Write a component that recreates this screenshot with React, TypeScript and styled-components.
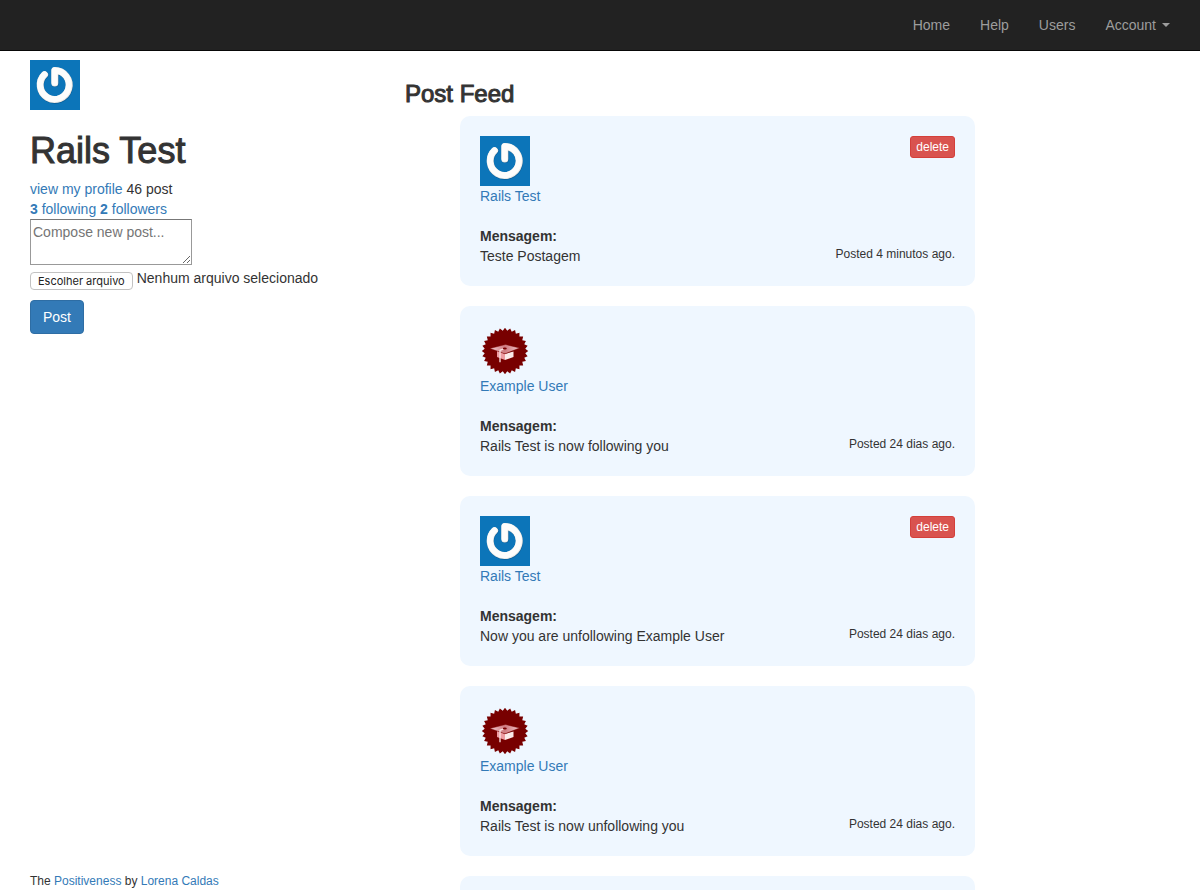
import React from "react";
import styled, { createGlobalStyle } from "styled-components";

const GlobalStyle = createGlobalStyle`
  *, *::before, *::after { box-sizing: border-box; }
  body {
    margin: 0;
    background: #fff;
    color: #333;
    font: 14px/20px "Helvetica Neue", Helvetica, "Liberation Sans", Arial, sans-serif;
  }
`;

const Page = styled.div`
  display: grid;
  grid-template-rows: auto minmax(0, 1fr);
  height: 100vh;
`;

const Navbar = styled.header`
  background: #222;
  border-bottom: 1px solid #080808;
`;

const NavList = styled.nav`
  display: flex;
  justify-content: flex-end;
  max-width: 1170px;
  margin: 0 auto;
`;

const NavLink = styled.a`
  display: flex;
  align-items: center;
  padding: 15px;
  color: #9d9d9d;
  text-decoration: none;
  &:hover { color: #fff; }
`;

const Caret = styled.span`
  margin-left: 6px;
  border-top: 4px solid;
  border-left: 4px solid transparent;
  border-right: 4px solid transparent;
`;

const Main = styled.main`
  display: grid;
  grid-template-columns: minmax(0, 1fr) minmax(0, 2fr);
  width: 100%;
  max-width: 1170px;
  margin: 0 auto;
  min-height: 0;
`;

const Sidebar = styled.aside`
  display: flex;
  flex-direction: column;
  align-items: flex-start;
  padding: 9px 15px 0;
`;

const UserName = styled.h1`
  margin: 20px 0 8px;
  font-size: 36px;
  line-height: 41px;
  font-weight: 500;
  -webkit-text-stroke: 1px currentColor;
`;

const Link = styled.a`
  color: #337ab7;
  text-decoration: none;
  &:hover { text-decoration: underline; }
`;

const PostForm = styled.form`
  display: flex;
  flex-direction: column;
  align-items: flex-start;
`;

const Composer = styled.textarea`
  width: 162px;
  height: 46px;
  padding: 2px;
  border: 1px solid #999;
  border-top-color: #777;
  font: inherit;
  color: inherit;
  &::placeholder { color: #757575; }
`;

const FilePicker = styled.label`
  display: flex;
  align-items: flex-start;
  gap: 4px;
  margin: 3px 0 10px;
`;

const FileInput = styled.input`
  position: absolute;
  width: 1px;
  height: 1px;
  opacity: 0;
`;

const FileButton = styled.span`
  margin-top: 4px;
  padding: 0 7px;
  border: 1px solid #c2c2c2;
  border-radius: 4px;
  color: #222;
  font: 11px/16px Inter, sans-serif;
`;

const Button = styled.button<{ $tone: "primary" | "danger" }>`
  border: 1px solid ${(p) => (p.$tone === "primary" ? "#2e6da4" : "#d43f3a")};
  border-radius: ${(p) => (p.$tone === "primary" ? 4 : 3)}px;
  padding: ${(p) => (p.$tone === "primary" ? "6px 12px" : "1px 5px")};
  background: ${(p) => (p.$tone === "primary" ? "#337ab7" : "#d9534f")};
  color: #fff;
  font-family: inherit;
  font-size: ${(p) => (p.$tone === "primary" ? 14 : 12)}px;
  line-height: ${(p) => (p.$tone === "primary" ? 20 : 18)}px;
  cursor: pointer;
`;

const Footer = styled.footer`
  margin-top: auto;
  font-size: 12px;
  line-height: 18px;
`;

const Feed = styled.section`
  padding: 9px 15px 0 0;
  overflow-y: auto;
  scrollbar-width: none;
`;

const FeedTitle = styled.h3`
  margin: 20px 0 8px;
  font-size: 24px;
  line-height: 28px;
  font-weight: 500;
  -webkit-text-stroke: 1px currentColor;
`;

const PostList = styled.ol`
  display: grid;
  gap: 20px;
  max-width: 570px;
  margin: 0;
  padding: 0 0 20px 55px;
  list-style: none;
`;

const PostCard = styled.li`
  display: flex;
  justify-content: space-between;
  min-height: 170px;
  padding: 20px;
  border-radius: 10px;
  background: #eff7ff;
`;

const PostBody = styled.div`
  display: flex;
  flex-direction: column;
  align-items: flex-start;
`;

const PostAside = styled.div`
  display: flex;
  flex-direction: column;
  align-items: flex-end;
`;

const MessageLabel = styled.strong`
  margin-top: 20px;
`;

const Timestamp = styled.time`
  margin-top: auto;
  padding-bottom: 3px;
  font-size: 12px;
  line-height: 18px;
`;

const AvatarSvg = styled.svg`
  display: block;
  flex: none;
`;

type Kind = "power" | "badge";

const TEETH = 28;
const badgePoints = Array.from({ length: TEETH * 2 }, (_, i) => {
  const angle = (i * Math.PI) / TEETH;
  const radius = i % 2 ? 20.4 : 23.2;
  return `${(25 + radius * Math.sin(angle)).toFixed(2)},${(25 - radius * Math.cos(angle)).toFixed(2)}`;
}).join(" ");

function Avatar({ kind, label }: { kind: Kind; label: string }) {
  if (kind === "power") {
    return (
      <AvatarSvg width="50" height="50" viewBox="0 0 50 50" role="img" aria-label={label}>
        <rect width="50" height="50" fill="#0c75b9" />
        <g fill="none" strokeWidth="7" strokeLinecap="round" strokeLinejoin="round">
          <path d="M25.3 23.6V11.1A14.5 14.5 0 1 1 15.1 15" stroke="#075b96" />
          <path d="M24.8 23V10.5A14.5 14.5 0 1 1 14.6 14.6" stroke="#e9e7e3" />
          <path d="M24.6 22.8V10.3A14.4 14.4 0 1 1 14.4 14.4" stroke="#fdfdfc" strokeWidth="6" />
        </g>
      </AvatarSvg>
    );
  }
  return (
    <AvatarSvg width="50" height="50" viewBox="0 0 50 50" role="img" aria-label={label}>
      <defs>
        <linearGradient id="board" x1="0" x2="1" y1="0" y2="0">
          <stop offset="0" stopColor="#f3cfd2" />
          <stop offset=".5" stopColor="#cf7a80" />
          <stop offset="1" stopColor="#f0c4c7" />
        </linearGradient>
      </defs>
      <polygon points={badgePoints} fill="#780000" />
      <path d="M17 25l8 3v6l-8-3z" fill="#ee9ca2" />
      <path d="M25 28l8.500-2.500v5.500L25 34z" fill="#fbeaea" />
      <path d="M10 22.500L25.500 18.500L39.500 22L25 27.800z" fill="url(#board)" stroke="#780000" strokeWidth=".4" />
      <path d="M24.500 22.500l-4.500 1.800v12" fill="none" stroke="#fbe4e5" strokeWidth="1.300" />
      <ellipse cx="24.800" cy="22.500" rx="2" ry="1" fill="#780000" />
    </AvatarSvg>
  );
}

const users: Record<Kind, string> = { power: "Rails Test", badge: "Example User" };

const posts: { kind: Kind; message: string; age: string }[] = [
  { kind: "power", message: "Teste Postagem", age: "4 minutos" },
  { kind: "badge", message: "Rails Test is now following you", age: "24 dias" },
  { kind: "power", message: "Now you are unfollowing Example User", age: "24 dias" },
  { kind: "badge", message: "Rails Test is now unfollowing you", age: "24 dias" },
];

export default function App() {
  return (
    <Page>
      <GlobalStyle />
      <Navbar>
        <NavList>
          <NavLink href="#home">Home</NavLink>
          <NavLink href="#help">Help</NavLink>
          <NavLink href="#users">Users</NavLink>
          <NavLink href="#account">Account<Caret /></NavLink>
        </NavList>
      </Navbar>
      <Main>
        <Sidebar>
          <Avatar kind="power" label="Rails Test" />
          <UserName>Rails Test</UserName>
          <div><Link href="#profile">view my profile</Link> 46 post</div>
          <div>
            <Link href="#following"><strong>3</strong> following</Link>{" "}
            <Link href="#followers"><strong>2</strong> followers</Link>
          </div>
          <PostForm onSubmit={(e) => e.preventDefault()}>
            <Composer aria-label="Compose new post" placeholder="Compose new post..." />
            <FilePicker>
              <FileInput type="file" />
              <FileButton>Escolher arquivo</FileButton>
              <span>Nenhum arquivo selecionado</span>
            </FilePicker>
            <Button $tone="primary" type="submit">Post</Button>
          </PostForm>
          <Footer>
            The <Link href="#positiveness">Positiveness</Link> by <Link href="#author">Lorena Caldas</Link>
          </Footer>
        </Sidebar>
        <Feed>
          <FeedTitle>Post Feed</FeedTitle>
          <PostList>
            {posts.map((post, i) => (
              <PostCard key={i}>
                <PostBody>
                  <Avatar kind={post.kind} label={users[post.kind]} />
                  <Link href="#user">{users[post.kind]}</Link>
                  <MessageLabel>Mensagem:</MessageLabel>
                  <span>{post.message}</span>
                </PostBody>
                <PostAside>
                  {post.kind === "power" && <Button $tone="danger" type="button">delete</Button>}
                  <Timestamp>Posted {post.age} ago.</Timestamp>
                </PostAside>
              </PostCard>
            ))}
            <PostCard aria-hidden="true" />
          </PostList>
        </Feed>
      </Main>
    </Page>
  );
}
